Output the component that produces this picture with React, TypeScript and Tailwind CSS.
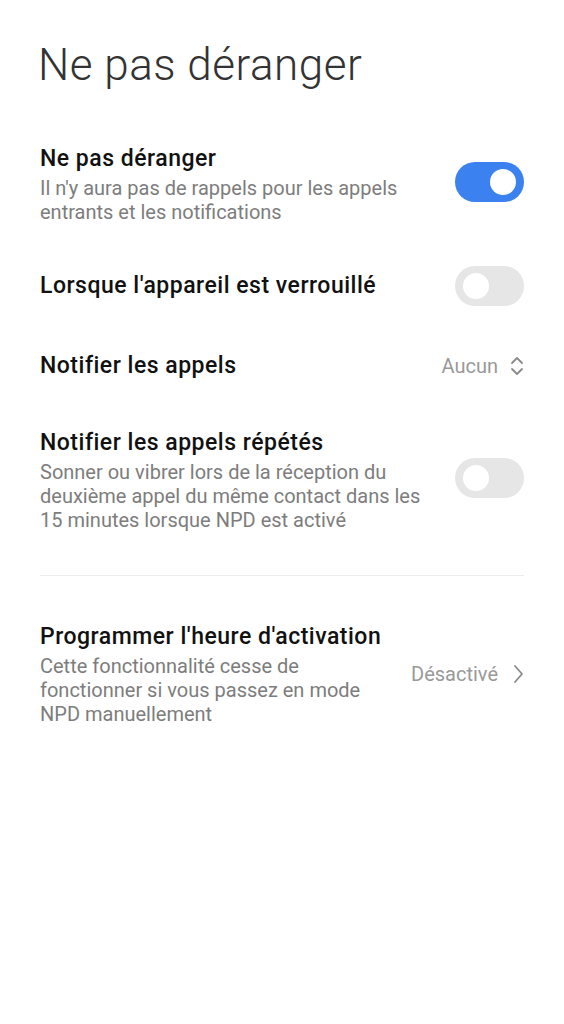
import React from 'react';

const font = { fontFamily: 'Roboto, "Noto Sans", sans-serif' };

const Toggle: React.FC<{ on?: boolean; lift?: boolean }> = ({ on, lift }) => (
    <div className={`relative w-[69px] h-[40px] rounded-full shrink-0 ${lift ? '-mt-[5px]' : ''} ${on ? 'bg-[#3b82f0]' : 'bg-[#e6e6e6]'}`}>
        <div className={`absolute top-[7px] w-[26px] h-[26px] rounded-full bg-white ${on ? 'right-[8px]' : 'left-[8px]'}`}></div>
    </div>
);

const UpDown = () => (
    <svg width="14" height="22" viewBox="0 0 14 22" fill="none" stroke="#8a8a8a" strokeWidth="1.8" strokeLinecap="round" strokeLinejoin="round">
        <path d="M2 8 L7 3 L12 8" />
        <path d="M2 14 L7 19 L12 14" />
    </svg>
);

const Chevron = () => (
    <svg width="12" height="20" viewBox="0 0 12 20" fill="none" stroke="#8a8a8a" strokeWidth="1.8" strokeLinecap="round" strokeLinejoin="round">
        <path d="M3 2 L10 10 L3 18" />
    </svg>
);

const Title: React.FC<{ children: React.ReactNode }> = ({ children }) => (
    <div className="text-[23px] leading-[30px] font-medium tracking-[0.5px] text-[#111] whitespace-nowrap">{children}</div>
);

const Sub: React.FC<{ children: React.ReactNode }> = ({ children }) => (
    <div className="text-[20px] leading-[24px] text-[#7d7d7d] mt-[2px] whitespace-nowrap">{children}</div>
);

export default function App() {
    return (
        <div className="bg-white min-h-screen w-[564px] px-10" style={font}>
            <h1 className="pt-[40px] text-[44px] leading-[50px] font-light tracking-[0.5px] text-[#333] -ml-[2px]">Ne pas déranger</h1>

            {/* Ne pas déranger */}
            <div className="mt-[54px] flex items-center justify-between gap-4">
                <div>
                    <Title>Ne pas déranger</Title>
                    <Sub>Il n'y aura pas de rappels pour les appels<br />entrants et les notifications</Sub>
                </div>
                <Toggle on lift />
            </div>

            {/* Verrouillé */}
            <div className="mt-[42px] flex items-center justify-between gap-4 h-[40px]">
                <Title>Lorsque l'appareil est verrouillé</Title>
                <Toggle />
            </div>

            {/* Notifier les appels */}
            <div className="mt-[40px] flex items-center justify-between gap-4 h-[40px]">
                <Title>Notifier les appels</Title>
                <div className="flex items-center gap-[12px] text-[20px] text-[#999]">
                    <span>Aucun</span>
                    <UpDown />
                </div>
            </div>

            {/* Appels répétés */}
            <div className="mt-[42px] flex items-center justify-between gap-4">
                <div>
                    <Title>Notifier les appels répétés</Title>
                    <Sub>Sonner ou vibrer lors de la réception du<br />deuxième appel du même contact dans les<br />15 minutes lorsque NPD est activé</Sub>
                </div>
                <Toggle lift />
            </div>

            <div className="mt-[43px] h-px bg-[#ececec]"></div>

            {/* Programmer */}
            <div className="mt-[46px] flex items-center justify-between gap-4">
                <div>
                    <Title>Programmer l'heure d'activation</Title>
                    <Sub>Cette fonctionnalité cesse de<br />fonctionner si vous passez en mode<br />NPD manuellement</Sub>
                </div>
                <div className="flex items-center gap-[14px] text-[20px] text-[#999] shrink-0">
                    <span>Désactivé</span>
                    <Chevron />
                </div>
            </div>
        </div>
    );
}
